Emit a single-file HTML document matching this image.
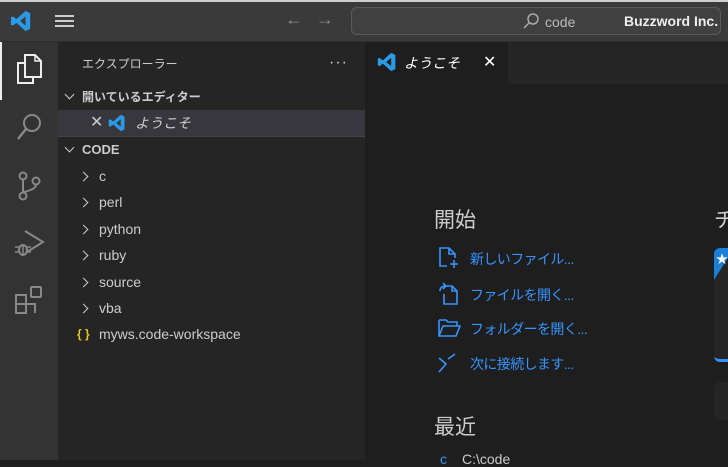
<!DOCTYPE html>
<html><head><meta charset="utf-8"><style>
*{margin:0;padding:0;box-sizing:border-box}
body{width:728px;height:460px;overflow:hidden;background:#1e1e1e;font-family:"Liberation Sans","Noto Sans CJK JP",sans-serif;position:relative;color:#ccc}
.abs{position:absolute}
.title{left:0;top:0;width:728px;height:42px;background:#3a3a3a;border-top:2px solid #cfcfcf;border-bottom:1px solid #2e2e2e}
.act{left:0;top:42px;width:58px;height:418px;background:#333}
.side{left:58px;top:42px;width:307px;height:418px;background:#252526}
.tabs{left:365px;top:42px;width:363px;height:42px;background:#252526}
.tab{left:365px;top:42px;width:143px;height:42px;background:#1e1e1e}
.row{position:absolute;left:58px;width:307px;height:26px;font-size:14px;line-height:26px;color:#ccc}
.chev{position:absolute;top:10px;width:7px;height:7px;border-right:1.5px solid #ccc;border-bottom:1.5px solid #ccc}
.link{position:absolute;left:470px;font-size:14px;color:#3794ff;letter-spacing:-0.6px}
</style></head><body>
<div class="abs title"></div>
<svg class="abs" style="left:10px;top:10px" width="22" height="22" viewBox="0 0 24 24"><path d="M17 1 L22 3.5 V20.5 L17 23 L7 14 L3 17 L1 16 V8 L3 7 L7 10 Z M17 7 L11 12 L17 17 Z" fill="#2a9ae6"/></svg>
<div class="abs" style="left:55px;top:15px;width:19px;height:2px;background:#ccc;box-shadow:0 5px 0 #ccc,0 10px 0 #ccc"></div>
<div class="abs" style="left:285px;top:9px;font-size:18px;color:#888">←</div>
<div class="abs" style="left:316px;top:9px;font-size:18px;color:#888">→</div>
<div class="abs" style="left:351px;top:7px;width:370px;height:28px;background:#404040;border:1px solid #5a5a5a;border-radius:6px"></div>
<svg class="abs" style="left:522px;top:12px" width="18" height="18" viewBox="0 0 18 18"><circle cx="11" cy="7" r="5" fill="none" stroke="#aaa" stroke-width="1.5"/><path d="M7.5 10.5 L2 16" stroke="#aaa" stroke-width="1.5"/></svg>
<div class="abs" style="left:545px;top:14px;font-size:14px;color:#bbb">code</div>
<div class="abs" style="left:624px;top:13px;font-size:14px;color:#eee;font-weight:bold">Buzzword Inc.</div>

<div class="abs act"></div>
<div class="abs" style="left:0;top:42px;width:2px;height:58px;background:#eee"></div>
<svg class="abs" style="left:15px;top:53px" width="28" height="32" viewBox="0 0 28 32"><path d="M10 2 H20 L26 8 V24 H10 Z" fill="none" stroke="#eee" stroke-width="2"/><path d="M20 2 V8 H26" fill="none" stroke="#eee" stroke-width="1.5"/><path d="M10 10 H3 V30 H18 V24" fill="none" stroke="#eee" stroke-width="2"/></svg>
<svg class="abs" style="left:16px;top:112px" width="28" height="30" viewBox="0 0 28 30"><circle cx="16" cy="11" r="8" fill="none" stroke="#888" stroke-width="2"/><path d="M10 17 L2 27" stroke="#888" stroke-width="2.5"/></svg>
<svg class="abs" style="left:16px;top:170px" width="26" height="32" viewBox="0 0 26 32"><circle cx="7" cy="6" r="3.5" fill="none" stroke="#888" stroke-width="2"/><circle cx="7" cy="26" r="3.5" fill="none" stroke="#888" stroke-width="2"/><circle cx="20" cy="11" r="3.5" fill="none" stroke="#888" stroke-width="2"/><path d="M7 10 V22 M20 15 Q20 19 8 22" fill="none" stroke="#888" stroke-width="2"/></svg>
<svg class="abs" style="left:13px;top:228px" width="32" height="32" viewBox="0 0 32 32"><path d="M12 3 L30 14 L14 24" fill="none" stroke="#888" stroke-width="2"/><ellipse cx="10" cy="22" rx="4" ry="5" fill="none" stroke="#888" stroke-width="2"/><path d="M2 19 H6 M2 24 H6 M14 19 H18 M14 24 H18 M10 17 V27" stroke="#888" stroke-width="1.5"/></svg>
<svg class="abs" style="left:14px;top:285px" width="30" height="30" viewBox="0 0 30 30"><path d="M2 10 H12 V28 H2 Z M2 19 H21 V28 M12 10 V19" fill="none" stroke="#888" stroke-width="2"/><rect x="17" y="2" width="10" height="10" rx="1" fill="none" stroke="#888" stroke-width="2"/></svg>

<div class="abs side"></div>
<div class="abs" style="left:82px;top:55px;font-size:12px;color:#ccc">エクスプローラー</div>
<div class="abs" style="left:329px;top:54px;font-size:16px;color:#ccc;letter-spacing:1px">···</div>
<div class="row" style="top:84px;font-weight:bold;font-size:12px"><div class="chev" style="left:8px;transform:rotate(45deg);top:7px"></div><span style="position:absolute;left:24px">開いているエディター</span></div>
<div class="row" style="top:110px;background:#37373d"><span style="position:absolute;left:32px;font-size:16px;color:#ccc">✕</span>
<svg style="position:absolute;left:50px;top:4px" width="18" height="18" viewBox="0 0 24 24"><path d="M17 1 L22 3.5 V20.5 L17 23 L7 14 L3 17 L1 16 V8 L3 7 L7 10 Z M17 7 L11 12 L17 17 Z" fill="#2a9ae6"/></svg>
<span style="position:absolute;left:77px;font-style:italic">ようこそ</span></div>
<div class="abs" style="left:58px;top:136px;width:307px;height:1px;background:#444"></div>
<div class="row" style="top:137px;font-weight:bold;font-size:13px"><div class="chev" style="left:8px;transform:rotate(45deg);top:7px"></div><span style="position:absolute;left:24px">CODE</span></div>
<div class="row" style="top:163px"><div class="chev" style="left:22px;transform:rotate(-45deg)"></div><span style="position:absolute;left:41px">c</span></div>
<div class="row" style="top:189px"><div class="chev" style="left:22px;transform:rotate(-45deg)"></div><span style="position:absolute;left:41px">perl</span></div>
<div class="row" style="top:216px"><div class="chev" style="left:22px;transform:rotate(-45deg)"></div><span style="position:absolute;left:41px">python</span></div>
<div class="row" style="top:242px"><div class="chev" style="left:22px;transform:rotate(-45deg)"></div><span style="position:absolute;left:41px">ruby</span></div>
<div class="row" style="top:269px"><div class="chev" style="left:22px;transform:rotate(-45deg)"></div><span style="position:absolute;left:41px">source</span></div>
<div class="row" style="top:295px"><div class="chev" style="left:22px;transform:rotate(-45deg)"></div><span style="position:absolute;left:41px">vba</span></div>
<div class="row" style="top:321px"><span style="position:absolute;left:19px;color:#e8c81b;font-size:12px;font-weight:bold">{ }</span><span style="position:absolute;left:41px">myws.code-workspace</span></div>

<div class="abs tabs"></div>
<div class="abs tab"></div>
<svg class="abs" style="left:377px;top:52px" width="20" height="20" viewBox="0 0 24 24"><path d="M17 1 L22 3.5 V20.5 L17 23 L7 14 L3 17 L1 16 V8 L3 7 L7 10 Z M17 7 L11 12 L17 17 Z" fill="#2a9ae6"/></svg>
<div class="abs" style="left:404px;top:53px;font-size:14px;color:#fff;font-style:italic">ようこそ</div>
<div class="abs" style="left:483px;top:52px;font-size:16px;color:#fff">✕</div>

<div class="abs" style="left:434px;top:204px;font-size:21px;color:#ccc">開始</div>
<svg class="abs" style="left:437px;top:246px" width="24" height="24" viewBox="0 0 24 24"><path d="M12 2 H3 V20 H10 M12 2 L18 8 V12 M12 2 V8 H18 M17 14 V22 M13 18 H21" fill="none" stroke="#3794ff" stroke-width="1.6"/></svg>
<div class="link" style="top:249px">新しいファイル...</div>
<svg class="abs" style="left:436px;top:282px" width="24" height="24" viewBox="0 0 24 24"><path d="M10 4 H16 L21 9 V22 H8 V12 M16 4 V9 H21 M4 9 Q4 4 10 4 M7 1 L10 4 L7 7" fill="none" stroke="#3794ff" stroke-width="1.6"/></svg>
<div class="link" style="top:285px">ファイルを開く...</div>
<svg class="abs" style="left:437px;top:317px" width="24" height="22" viewBox="0 0 24 22"><path d="M2 3 H9 L11 5 H20 V9 M2 3 V19 H19 L23 9 H6 L2 19" fill="none" stroke="#3794ff" stroke-width="1.6"/></svg>
<div class="link" style="top:319px">フォルダーを開く...</div>
<svg class="abs" style="left:437px;top:352px" width="22" height="22" viewBox="0 0 22 22"><path d="M2 6 L9 12 L2 20 M18 2 L11 7" fill="none" stroke="#3794ff" stroke-width="1.6"/></svg>
<div class="link" style="top:354px">次に接続します...</div>
<div class="abs" style="left:434px;top:411px;font-size:21px;color:#ccc">最近</div>
<div class="abs" style="left:440px;top:451px;font-size:14px;color:#3794ff">c</div>
<div class="abs" style="left:462px;top:451px;font-size:14px;color:#ccc">C:\code</div>

<div class="abs" style="left:714px;top:204px;font-size:21px;color:#ccc">チ</div>
<div class="abs" style="left:714px;top:248px;width:20px;height:114px;background:#252526;border-radius:6px;overflow:hidden;border-bottom:3px solid #3794ff">
<div style="position:absolute;left:0;top:0;width:0;height:0;border-top:32px solid #1a7fd6;border-right:20px solid transparent"></div>
<div style="position:absolute;left:2px;top:2px;color:#fff;font-size:12px">★</div></div>
<div class="abs" style="left:714px;top:382px;width:20px;height:38px;background:#252526;border-radius:6px"></div>
</body></html>
